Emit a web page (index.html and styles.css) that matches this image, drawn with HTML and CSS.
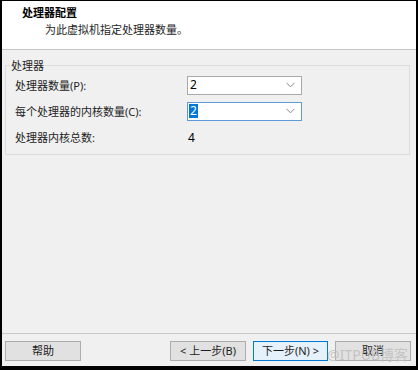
FILE: index.html
```html
<!DOCTYPE html>
<html lang="zh-CN">
<head>
<meta charset="utf-8">
<link rel="stylesheet" href="styles.css">
</head>
<body>
<div class="win">
  <div class="header">
    <div class="title">处理器配置</div>
    <div class="subtitle">为此虚拟机指定处理器数量。</div>
  </div>
  <div class="body">
    <fieldset class="group">
      <legend>处理器</legend>
      <div class="rows">
        <div class="label">处理器数量(<span class="lat">P</span>):</div>
        <div class="combo"><span class="val">2</span><svg class="chev" width="9" height="6" viewBox="0 0 9 6"><path d="M0.5 0.8 L4.5 4.8 L8.5 0.8" fill="none" stroke="#8a8a8a" stroke-width="1"/></svg></div>
        <div class="label">每个处理器的内核数量(<span class="lat">C</span>):</div>
        <div class="combo focus"><span class="val sel">2</span><svg class="chev" width="9" height="6" viewBox="0 0 9 6"><path d="M0.5 0.8 L4.5 4.8 L8.5 0.8" fill="none" stroke="#8a8a8a" stroke-width="1"/></svg></div>
        <div class="label">处理器内核总数:</div>
        <div class="total">4</div>
      </div>
    </fieldset>
  </div>
  <div class="footer">
    <button class="btn">帮助</button>
    <div class="nav">
      <button class="btn">&lt; 上一步(<span class="lat">B</span>)</button>
      <button class="btn default">下一步(<span class="lat">N</span>) &gt;</button>
      <button class="btn">取消</button>
    </div>
    <div class="watermark">@ITPUB博客</div>
  </div>
</div>
</body>
</html>
```

FILE: styles.css
```css
html, body {
  margin: 0;
  padding: 0;
  background: #000;
}
body {
  width: 418px;
  height: 370px;
  overflow: hidden;
  font-family: "Noto Sans", "Noto Sans CJK SC", sans-serif;
  font-size: 11px;
  color: #1e1e1e;
}
.win {
  margin: 1px 2px 0 2px;
  width: 414px;
  height: 365px;
  background: #f0f0f0;
  display: flex;
  flex-direction: column;
}
.header {
  height: 48px;
  background: #fff;
  border-bottom: 1px solid #c4c4c4;
  box-sizing: content-box;
  padding-left: 20px;
}
.title {
  font-weight: bold;
  line-height: 14px;
  margin-top: 5px;
  color: #000;
}
.subtitle {
  line-height: 14px;
  margin-top: 3px;
  padding-left: 23px;
}
.body {
  flex: 1;
}
.group {
  margin: 9px 6px 0 3px;
  padding: 0 0 4px 9px;
  border: 1px solid #dcdcdc;
  min-width: 0;
}
.group legend {
  padding: 0 1px;
  margin-left: -5px;
  line-height: 13px;
}
.rows {
  display: grid;
  grid-template-columns: 172px 115px;
  grid-auto-rows: 26px;
  align-items: center;
}
.combo {
  height: 19px;
  box-sizing: border-box;
  border: 1px solid #a9a9a9;
  background: #fff;
  display: flex;
  align-items: center;
  justify-content: space-between;
  padding: 0 6px 0 2px;
}
.combo.focus {
  border-color: #5a9bd8;
}
.val {
  font-size: 12px;
  line-height: 14px;
  color: #000;
}
.val.sel {
  background: #0078d7;
  color: #fff;
  padding: 0 1px;
  margin-left: -1px;
}
.chev {
  display: block;
}
.total {
  font-size: 12px;
  padding-left: 1px;
  color: #000;
}
.footer {
  height: 33px;
  box-sizing: border-box;
  border-top: 1px solid #c9c9c9;
  padding: 7px 5px 0 3px;
  display: flex;
  justify-content: space-between;
  align-items: flex-start;
  position: relative;
}
.nav {
  display: flex;
  gap: 7px;
}
.btn {
  width: 76px;
  height: 20px;
  box-sizing: border-box;
  border: 1px solid #adadad;
  background: #e1e1e1;
  font-family: "Noto Sans", "Noto Sans CJK SC", sans-serif;
  font-size: 11px;
  color: #1e1e1e;
  padding: 0;
  line-height: 16px;
}
.btn.default {
  border-color: #0078d7;
  background: #e5f1fb;
  width: 75px;
}
.watermark {
  position: absolute;
  right: 8px;
  top: 10px;
  font-family: "Noto Sans", "Noto Sans CJK SC", sans-serif;
  font-size: 14px;
  color: rgba(190, 190, 190, 0.85);
  pointer-events: none;
}
```
